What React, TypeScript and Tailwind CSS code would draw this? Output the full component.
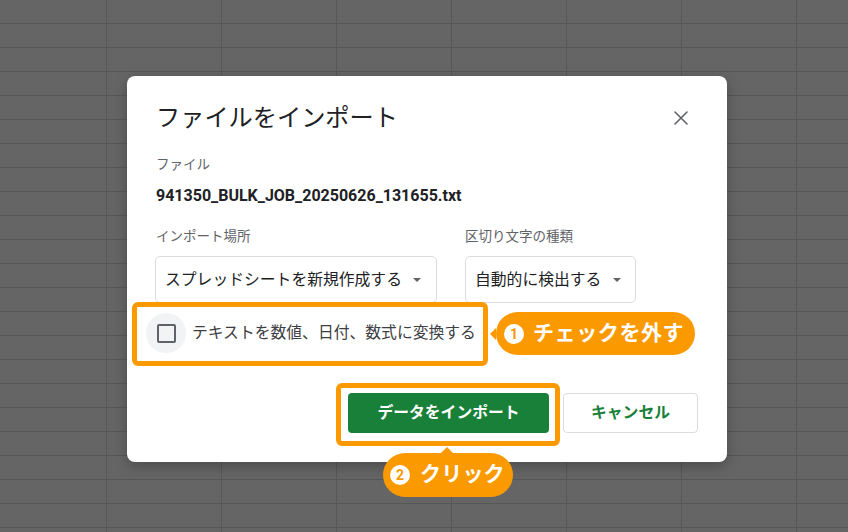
import React from 'react';

function Caret() {
  return (
    <svg width="8" height="4" viewBox="0 0 8 4" className="shrink-0">
      <path d="M0 0h8L4 4z" fill="#5f6368" />
    </svg>
  );
}

function CloseIcon() {
  return (
    <svg width="14" height="14" viewBox="0 0 14 14">
      <path d="M1 1L13 13M13 1L1 13" stroke="#5f6368" strokeWidth="1.6" strokeLinecap="round" />
    </svg>
  );
}

function NumberDot({ n }: { n: string }) {
  return (
    <span className="w-[20px] h-[20px] rounded-full bg-white text-[#fa9a00] text-[14px] leading-none font-bold flex items-center justify-center shrink-0">
      {n}
    </span>
  );
}

export default function App() {
  return (
    <div className="relative w-[848px] h-[532px] overflow-hidden bg-[#656565] font-[Roboto,'Noto_Sans_CJK_JP',sans-serif] [background-image:linear-gradient(90deg,#575757_1px,transparent_1px),linear-gradient(#575757_1px,transparent_1px)] [background-size:115px_100%,100%_24px] [background-position:106px_0,0_23px]">
      {/* Dialog */}
      <div className="absolute left-[127px] top-[76px] w-[600px] bg-white rounded-[8px] shadow-[0_4px_14px_rgba(0,0,0,0.25)] pt-[26px] pb-[29px] pl-[29px] pr-[29px] flex flex-col">
        <div className="flex items-center justify-between h-[32px]">
          <h1 className="text-[24.2px] leading-[32px] text-[#202124] font-normal">ファイルをインポート</h1>
          <button className="w-[36px] h-[36px] flex items-center justify-center rounded-full -mr-px">
            <CloseIcon />
          </button>
        </div>

        <p className="mt-[20px] text-[13.5px] leading-[20px] text-[#5f6368]">ファイル</p>
        <p className="mt-[11px] text-[16px] leading-[22px] font-bold text-[#202124]">941350_BULK_JOB_20250626_131655.txt</p>

        <div className="mt-[19px] flex gap-[28px]">
          <div className="flex flex-col w-[282px] -ml-px">
            <span className="pl-px text-[13.5px] leading-[20px] text-[#5f6368]">インポート場所</span>
            <div className="mt-[10px] h-[47px] w-[282px] border border-[#dadce0] rounded-[5px] flex items-center pl-[9px] gap-[11px] text-[15.8px] text-[#202124]">
              <span className="whitespace-nowrap">スプレッドシートを新規作成する</span>
              <Caret />
            </div>
          </div>
          <div className="flex flex-col">
            <span className="text-[13.5px] leading-[20px] text-[#5f6368]">区切り文字の種類</span>
            <div className="mt-[10px] h-[47px] w-[171px] border border-[#dadce0] rounded-[5px] flex items-center pl-[9px] gap-[12px] text-[15.8px] text-[#202124]">
              <span className="whitespace-nowrap">自動的に検出する</span>
              <Caret />
            </div>
          </div>
        </div>

        {/* Checkbox row */}
        <div className="relative mt-[10px] -ml-[10px] h-[40px] flex items-center gap-[6px]">
          <div className="w-[40px] h-[40px] rounded-full bg-[#f1f3f4] flex items-center justify-center">
            <div className="w-[19px] h-[19px] border-2 border-[#5f6368] rounded-[2px]" />
          </div>
          <span className="text-[15.8px] text-[#3c4043] whitespace-nowrap">テキストを数値、日付、数式に変換する</span>
          <div className="absolute -left-[14px] -top-[11px] w-[356px] h-[64px] border-[5px] border-[#fa9a00] rounded-[6px]" />
        </div>

        {/* Buttons */}
        <div className="mt-[40px] flex justify-end gap-[14px]">
          <div className="relative">
            <button className="w-[201px] h-[40px] rounded-[4px] bg-[#188038] text-white text-[15.8px] font-bold">
              データをインポート
            </button>
            <div className="absolute -left-[12px] -top-[10px] w-[224px] h-[63px] border-[5px] border-[#fa9a00] rounded-[6px]" />
          </div>
          <button className="w-[135px] h-[40px] rounded-[4px] border border-[#dadce0] bg-white text-[#188038] text-[15.8px] font-bold">
            キャンセル
          </button>
        </div>

        {/* Callout 1 */}
        <div className="absolute left-[363px] top-[236px] flex items-center">
          <div className="w-0 h-0 border-y-[6px] border-y-transparent border-r-[6px] border-r-[#fa9a00]" />
          <div className="h-[43px] w-[199px] rounded-full bg-[#fa9a00] flex items-center pl-[8px] gap-[9px]">
            <NumberDot n="1" />
            <span className="text-white text-[21px] font-bold tracking-[0.6px] whitespace-nowrap">チェックを外す</span>
          </div>
        </div>

        {/* Callout 2 */}
        <div className="absolute left-[256px] top-[371px] flex flex-col">
          <div className="ml-[58px] w-0 h-0 border-x-[6px] border-x-transparent border-b-[6px] border-b-[#fa9a00]" />
          <div className="h-[44px] w-[130px] rounded-full bg-[#fa9a00] flex items-center pl-[7px] gap-[10px]">
            <NumberDot n="2" />
            <span className="text-white text-[21px] font-bold tracking-[0.2px] whitespace-nowrap">クリック</span>
          </div>
        </div>
      </div>
    </div>
  );
}
